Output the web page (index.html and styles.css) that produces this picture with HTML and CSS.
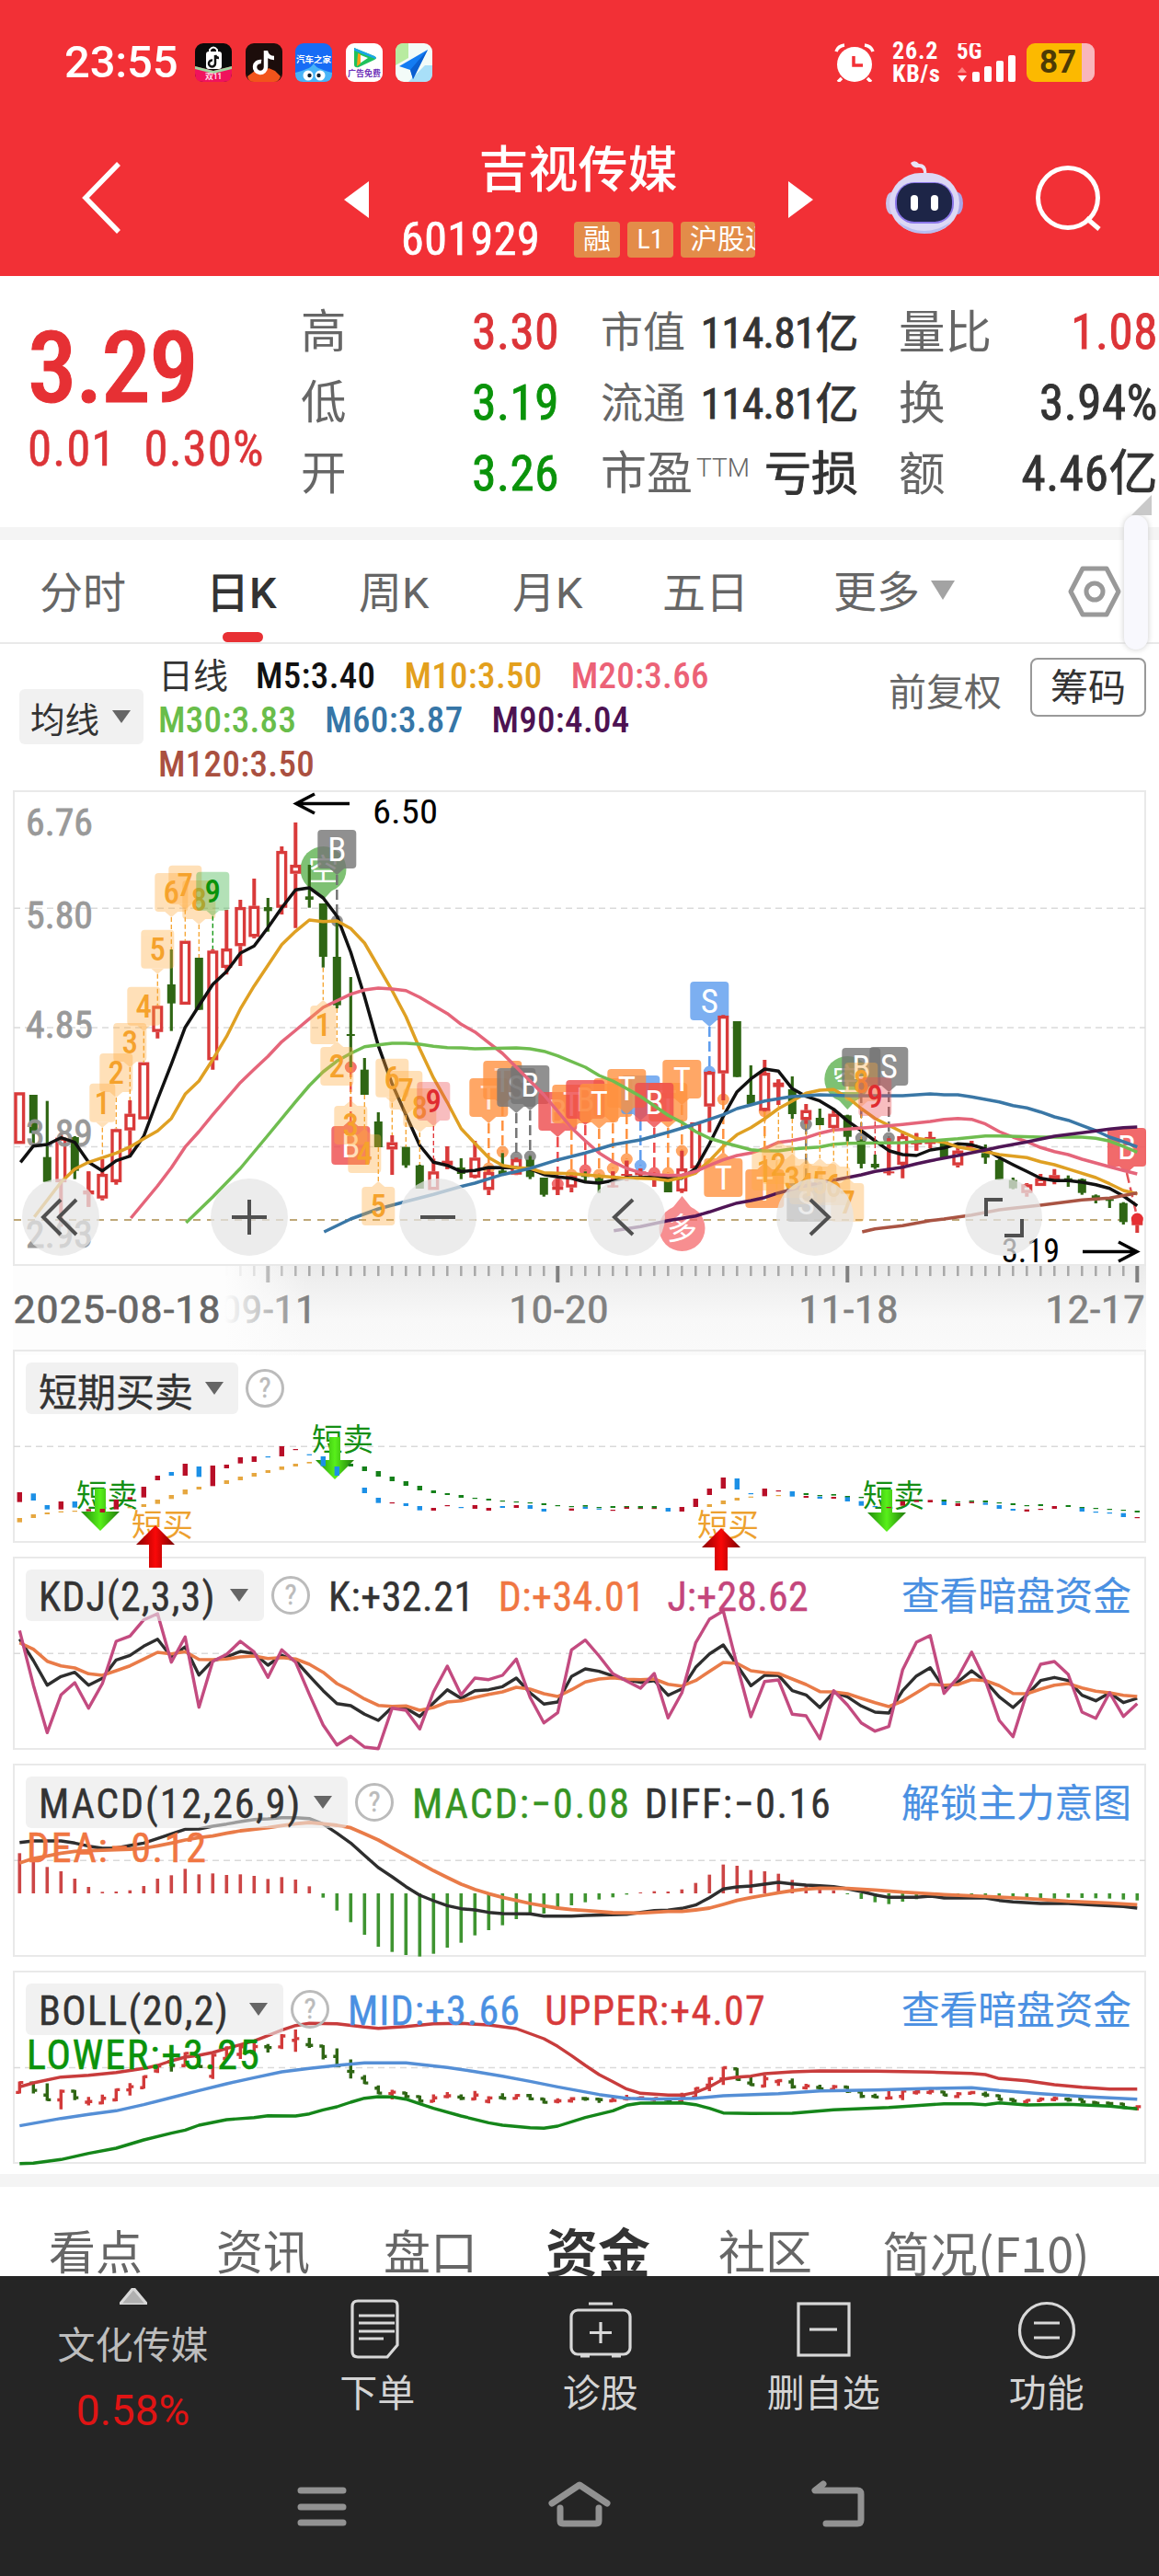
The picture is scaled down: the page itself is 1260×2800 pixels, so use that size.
FILE: index.html
```html
<!DOCTYPE html>
<html lang="zh-CN">
<head>
<meta charset="utf-8">
<title>吉视传媒 601929</title>
<link rel="stylesheet" href="styles.css">
</head>
<body>
<div class="phone">
<header class="top">
  <div class="status">
    <span class="clock">23:55</span>
    <div class="apps">
      <svg viewBox="0 0 40 42"><rect width="40" height="42" rx="9" fill="#0a0a0a"/><path d="M0 25l20 5 20-5v8q0 9-9 9H9q-9 0-9-9z" fill="#f0125c"/><path d="M0 25l20 5 20-5v3l-20 5-20-5z" fill="#9fd6a0"/><rect x="12" y="9" width="17" height="19" rx="3" fill="#fff"/><path d="M16 10v-3q4-5 8 0v3" fill="none" stroke="#fff" stroke-width="2"/><path d="M22 13v9a3.500 3.500 0 1 1-3-3.500M22 13q1 3 4 3" fill="none" stroke="#111" stroke-width="2.500"/><text x="20" y="39" font-size="9" font-weight="700" fill="#ffd7e4" text-anchor="middle">双11</text></svg>
      <svg viewBox="0 0 40 42"><rect width="40" height="42" rx="9" fill="#1c0d0b"/><path d="M2 36l8-6 6 4 9-7 7 3 6 6q-2 6-7 6H9q-6 0-7-6z" fill="#f2541b"/><path d="M22 8v18a6 6 0 1 1-5-6M22 9q2 7 9 7" fill="none" stroke="#fff" stroke-width="4.500"/></svg>
      <svg viewBox="0 0 40 42"><rect width="40" height="42" rx="9" fill="#176cf5"/><path d="M0 32q8-2 12-4 5-1 8-6 3 5 8 6 4 2 12 4v1q0 9-9 9H9q-9 0-9-9z" fill="#48b4f7"/><text x="20" y="21" font-size="9.500" font-weight="700" fill="#fff" text-anchor="middle">汽车之家</text><circle cx="14" cy="35" r="5.500" fill="#fff"/><circle cx="27" cy="35" r="5.500" fill="#fff"/><circle cx="15.500" cy="35" r="2.200" fill="#123"/><circle cx="25.500" cy="35" r="2.200" fill="#123"/></svg>
      <svg viewBox="0 0 40 42"><rect width="40" height="42" rx="9" fill="#fff"/><path d="M9 5l22 9q4 2 0 4L14 26q-5 1-5-3z" fill="#1ec25b"/><path d="M9 5l22 9q3 2 1 3L9 8z" fill="#1aa4ea"/><path d="M14 12l10 4-9 6z" fill="#fff"/><path d="M13 11l3 1v10l-4 3z" fill="#ff9d18"/><text x="20" y="36" font-size="9" font-weight="700" fill="#6e30b8" text-anchor="middle">广告免费</text></svg>
      <svg viewBox="0 0 40 42"><rect width="40" height="42" rx="9" fill="#f3fbf8"/><path d="M0 9q0-9 9-9h5v16L0 24z" fill="#b8eba0"/><path d="M14 42L32 24h8v9q0 9-9 9z" fill="#a8dff8"/><path d="M35 7L4 25l12 4 3 10z" fill="#147cf2"/><path d="M35 7L16 29l3 10z" fill="#0a5fd0"/></svg>
    </div>
    <div class="sys">
      <svg class="alarm" viewBox="0 0 44 42"><circle cx="22" cy="23" r="19" fill="#fff"/><path d="M2 9q2-6 9-7M42 9q-2-6-9-7M8 38l-4 4M36 38l4 4" stroke="#fff" stroke-width="3.500" fill="none"/><path d="M21 14v10h10" stroke="#f23036" stroke-width="3.500" fill="none"/></svg>
      <div class="rate"><span>26.2</span><span>KB/s</span></div>
      <svg class="signal" viewBox="0 0 66 42"><text x="0" y="17" font-size="25" font-weight="700" fill="#fff">5G</text><path d="M6 26l5 6H1z" fill="#ff8080"/><path d="M6 42l5-7H1z" fill="#fff"/><g fill="#fff"><rect x="17" y="31" width="8" height="11" rx="2"/><rect x="30" y="25" width="8" height="17" rx="2"/><rect x="43" y="19" width="8" height="23" rx="2"/><rect x="56" y="13" width="8" height="29" rx="2"/></g></svg>
      <div class="battery"><span>87</span></div>
    </div>
  </div>
  <div class="nav">
    <svg class="back" viewBox="0 0 44 80"><path d="M40 3L4 40l36 37" fill="none" stroke="#fff" stroke-width="5.500"/></svg>
    <svg class="tri" viewBox="0 0 28 42"><path d="M28 1v40L1 21z" fill="#fff"/></svg>
    <div class="title">
      <h1>吉视传媒</h1>
      <div class="code"><b>601929</b><div class="tags"><i>融</i><i>L1</i><i>沪股通</i></div></div>
    </div>
    <svg class="tri" viewBox="0 0 28 42"><path d="M0 1v40l27-20z" fill="#fff"/></svg>
    <svg class="robot" viewBox="0 0 86 80"><path d="M42 16q1-10-6-9-6 1-8-5 5-4 9 1 10 0 8 13z" fill="#e9e4f6"/><ellipse cx="7" cy="46" rx="6" ry="12" fill="#c9c3ea"/><ellipse cx="79" cy="46" rx="6" ry="12" fill="#a8a4e6"/><rect x="5" y="13" width="76" height="65" rx="34" fill="#dcd8f5"/><path d="M14 66q29 20 58 0-10 13-29 13T14 66z" fill="#b9bdf0"/><rect x="11" y="23" width="64" height="45" rx="21" fill="#8b77e8"/><rect x="13" y="24" width="60" height="42" rx="19" fill="#1d2547"/><rect x="28" y="37" width="8" height="17" rx="4" fill="#fff"/><rect x="50" y="37" width="8" height="17" rx="4" fill="#fff"/></svg>
    <svg class="search" viewBox="0 0 72 72"><circle cx="35" cy="35" r="32.500" fill="none" stroke="#fff" stroke-width="5"/><path d="M55 57l14 12" stroke="#fff" stroke-width="5"/></svg>
  </div>
</header>

<section class="quote">
  <div class="price"><strong>3.29</strong><div class="chg"><span>0.01</span><span>0.30%</span></div></div>
  <dl class="c1"><dt>高</dt><dd class="red">3.30</dd><dt>低</dt><dd class="green">3.19</dd><dt>开</dt><dd class="green">3.26</dd></dl>
  <dl class="c2"><dt>市值</dt><dd>114.81亿</dd><dt>流通</dt><dd>114.81亿</dd><dt class="pe">市盈<sup>TTM</sup></dt><dd class="loss">亏损</dd></dl>
  <dl class="c3"><dt>量比</dt><dd class="red">1.08</dd><dt>换</dt><dd>3.94%</dd><dt>额</dt><dd>4.46亿</dd></dl>
</section>
<div class="band"></div>
<nav class="periods">
  <span>分时</span><span class="on">日K</span><span>周K</span><span>月K</span><span>五日</span><span class="more">更多<svg viewBox="0 0 26 21"><path d="M0 0h26L13 21z" fill="#a3a3a3"/></svg></span>
  <svg class="hex" viewBox="0 0 58 56"><path d="M16 3h26l13 25-13 25H16L3 28z" fill="none" stroke="#999" stroke-width="5" stroke-linejoin="round"/><circle cx="29" cy="28" r="9" fill="none" stroke="#999" stroke-width="5"/></svg>
  <div class="grip"><svg viewBox="0 0 22 22"><path d="M22 0v22H0z" fill="#c4c4c4"/></svg><div></div></div>
</nav>

<section class="legend">
  <button class="chip">均线<i class="caret"></i></button>
  <div class="mas">
    <span class="cn">日线</span><span class="m5">M5:3.40</span><span class="m10">M10:3.50</span><span class="m20">M20:3.66</span>
    <span class="m30">M30:3.83</span><span class="m60">M60:3.87</span><span class="m90">M90:4.04</span>
    <span class="m120">M120:3.50</span>
  </div>
  <span class="adj">前复权</span><button class="chips">筹码</button>
</section>

<section class="plot"><svg id="price" viewBox="14 859 1232 516"></svg></section>
<section class="dates"><svg id="dates" viewBox="14 1375 1232 92"></svg></section>

<section class="panel">
  <svg class="draw" id="shortp" viewBox="14 1467 1232 210"></svg>
  <div class="head"><button class="chip">短期买卖<i class="caret"></i></button><i class="help">?</i></div>
</section>
<section class="panel">
  <svg class="draw" id="kdj" viewBox="14 1692 1232 210"></svg>
  <div class="head"><button class="chip k">KDJ(2,3,3)<i class="caret"></i></button><i class="help">?</i><span class="v g1">K:+32.21</span><span class="v d">D:+34.01</span><span class="v j">J:+28.62</span><a>查看暗盘资金</a></div>
</section>
<section class="panel">
  <svg class="draw" id="macd" viewBox="14 1917 1232 210"></svg>
  <div class="head"><button class="chip m">MACD(12,26,9)<i class="caret"></i></button><i class="help">?</i><span class="v g2">MACD:−0.08</span><span class="v diff">DIFF:−0.16</span><a>解锁主力意图</a></div>
  <div class="line2 dea">DEA:−0.12</div>
</section>
<section class="panel">
  <svg class="draw" id="boll" viewBox="14 2142 1232 210"></svg>
  <div class="head"><button class="chip b">BOLL(20,2)<i class="caret"></i></button><i class="help">?</i><span class="v mid">MID:+3.66</span><span class="v up">UPPER:+4.07</span><a>查看暗盘资金</a></div>
  <div class="line2 low">LOWER:+3.25</div>
</section>
<div class="band b2"></div>
<nav class="sections"><span>看点</span><span>资讯</span><span>盘口</span><span class="on">资金</span><span>社区</span><span class="f10">简况(F10)</span></nav>

<footer>
  <div class="actions">
    <div class="sector"><svg viewBox="0 0 30 18"><path d="M15 0l15 18H0z" fill="#b0b0b0"/></svg><span>文化传媒</span><em>0.58%</em></div>
    <div><svg viewBox="0 0 68 66"><path d="M13 2h38q5 0 5 5v43L45 63H13q-6 0-6-6V8q0-6 6-6z" /><path d="M14 18h39M14 26h39M14 35h39M14 43h27"/></svg><span>下单</span></div>
    <div><svg viewBox="0 0 68 66"><rect x="2" y="12" width="64" height="48" rx="7"/><path d="M21 5h26M12 62h10M46 62h10M34 25v23M22 36.500h24"/></svg><span>诊股</span></div>
    <div><svg viewBox="0 0 68 66"><rect x="7" y="5" width="55" height="56"/><path d="M19 33h30"/></svg><span>删自选</span></div>
    <div><svg viewBox="0 0 68 66"><circle cx="34" cy="34" r="29.500"/><path d="M20 26h28M20 42h28"/></svg><span>功能</span></div>
  </div>
  <div class="sysnav">
    <svg viewBox="0 0 72 56"><path d="M13 13h46M13 31h46M13 48h46"/></svg>
    <svg viewBox="0 0 72 56"><path d="M6 27L36 7l30 20M15 32v14q0 3 3 3h36q3 0 3-3V32"/></svg>
    <svg viewBox="0 0 72 56"><path d="M21 6l-9 7h46q4 0 4 4v28q0 4-4 4H24"/></svg>
  </div>
</footer>
</div>
<script src="charts.js"></script>
</body>
</html>
```
FILE: styles.css
```css
*{box-sizing:border-box}
body{margin:0;background:#fff;font-family:Roboto,"Noto Sans CJK SC",sans-serif;font-stretch:75%;color:#333}
.phone{width:1260px;height:2800px;overflow:hidden;background:#fff;display:flex;flex-direction:column}
.phone>*{flex:none}
button{font:inherit;border:0;color:inherit;padding:0}
i,em{font-style:normal}
svg{display:block}
svg text{font-family:Roboto,"Noto Sans CJK SC",sans-serif;font-stretch:75%}
.red{color:#dc3438}.green{color:#0a930a}

.top{height:300px;background:#f23036;color:#fff}
.status{height:135px;padding:0 70px;display:flex;align-items:center}
.clock{font-size:49px;font-weight:500;font-stretch:100%;letter-spacing:-.2px;width:142px}
.apps{display:flex;gap:14.600px}
.apps svg{width:40px;height:42px}
.sys{margin-left:auto;display:flex;align-items:center}
.alarm{width:44px;height:42px;margin-right:19px}
.rate{display:flex;flex-direction:column;font-size:26px;font-weight:700;line-height:25px;width:70px;height:50px;letter-spacing:.8px}
.signal{width:66px;height:42px;margin-right:10px}
.battery{width:74px;height:42px;border-radius:9px;background:linear-gradient(90deg,#fcb900 60px,#f9b6bc 60px);color:#4c3a05;font-size:35px;font-weight:700;line-height:42px;padding-left:14px;font-stretch:100%}
.nav{height:165px;display:flex;align-items:flex-start}
.back{width:44px;height:80px;margin:40px 240px 0 89px}
.tri{width:28px;height:42px;margin-top:61px}
.title{width:456px;padding-left:35px;height:165px}
h1{margin:15px 0 0;font-size:54px;line-height:72px;font-weight:500;width:385px;text-align:center}
.code{display:flex;align-items:center;height:42px;margin-top:17px;width:390px}
.code b{font-size:50px;font-weight:400;width:188px;letter-spacing:.5px;-webkit-text-stroke:.7px}
.tags{display:flex;gap:8px;width:197px;overflow:hidden}
.tags i{height:39px;line-height:38px;background:#e38c49;border-radius:4px;font-size:30px;padding:0 10px;white-space:nowrap;min-width:50px;text-align:center}
.robot{width:86px;height:80px;margin:40px 0 0 77px}
.search{width:72px;height:72px;margin:45px 0 0 78px}

.quote{height:273px;display:flex;padding-top:23px;position:relative}
.price{width:327px;padding-left:30px;color:#e63034}
.price strong{display:block;font-size:107px;line-height:110px;margin-top:23px;font-weight:500;letter-spacing:-1.500px;-webkit-text-stroke:1px}
.chg{display:flex;gap:30px;font-size:53px;line-height:60px;margin-top:2px;color:#dc3438;letter-spacing:1px;-webkit-text-stroke:.5px}
dl{margin:0;display:grid;grid-template-columns:auto 1fr;grid-auto-rows:77px;align-items:center;line-height:77px;white-space:nowrap}
dt{font-size:49.500px;color:#666}
dd{margin:0;text-align:right;font-size:53px;-webkit-text-stroke:.9px;letter-spacing:.6px}
.c1{width:281px;margin-right:45px}
.c2{width:280px;margin-right:44px;grid-template-columns:108px 172px}
.c2 dt{font-size:46px}.c2 dd{font-size:47px;letter-spacing:-.6px}
.c2 .pe{font-size:50px}.c2 .loss{font-size:51px;letter-spacing:0}
sup{font-size:28px;font-weight:300;vertical-align:14px;line-height:1;margin-left:4px;font-stretch:100%}
.c3{width:282px}
.c3 dt{font-size:50.500px}
.band{height:14px;background:#f4f4f4}
.periods{height:113px;border-bottom:2px solid #e9e9e9;display:flex;padding-left:43px;font-size:47px;line-height:116px;color:#666;position:relative;font-stretch:100%}
.periods span{width:167px;position:relative}
.periods span:first-child{width:181px}
.periods span:nth-child(2){width:166px;color:#333;font-weight:500}
.periods span:nth-child(4){width:163px}
.periods span:nth-child(5){width:186px}
.periods .on::after{content:"";position:absolute;left:18px;bottom:0;width:44px;height:11px;border-radius:6px;background:#e83034}
.periods .more{display:flex;align-items:center;gap:12px;width:180px;padding-top:3px}
.more svg{width:26px;height:21px;margin-top:-5px}
.hex{width:58px;height:56px;margin:28px 0 0 75px}
.grip{position:absolute;right:8px;top:-49px;width:30px}
.grip svg{width:22px;height:22px;margin-left:8px;opacity:.9}
.grip div{height:146px;width:26px;border-radius:13px;background:#f8f8fd;box-shadow:0 0 6px #ccc}

.legend{height:159px;display:flex;padding-left:21px;position:relative}
.chip{display:flex;align-items:center;gap:11px;border-radius:6px;background:rgba(232,232,232,.6)}
.caret{border:solid transparent;border-width:14px 10.500px 0;border-top-color:#666}
.legend .chip{margin-top:49px;width:135px;height:60px;padding:0 14px 0 12px;font-size:37.500px;white-space:nowrap}
.mas{margin-left:16px;padding-top:11px;display:flex;flex-wrap:wrap;column-gap:31px;width:640px;font-size:39px;line-height:48px;height:154px;font-weight:500;align-content:flex-start;letter-spacing:.3px}
.mas .cn{font-weight:400;width:75px;letter-spacing:0;font-size:38px;white-space:nowrap}
.m5{color:#111}.m10{color:#e3a01d}.m20{color:#ec6277}.m30{color:#69bd4a}.m60{color:#3676a7}.m90{color:#4d1252}.m120{color:#aa5040}
.mas .m90{margin-right:60px}
.adj{font-size:41px;line-height:60px;color:#666;margin:23px 0 0 154px;white-space:nowrap}
.chips{width:126px;height:64px;border:2px solid #999;border-radius:8px;background:#fff;font-size:41px;line-height:62px;margin:15px 0 0 31px}
.plot{height:516px;padding-left:14px}
.plot svg,.dates svg{width:1232px;height:100%;overflow:visible}
.plot svg{position:relative;z-index:1}
.dates{height:92px;padding-left:14px;color:#666}
.dates svg{height:92px}
.panel{width:1232px;height:210px;margin:0 0 15px 14px;border:2px solid #e9e9e9;position:relative}
.draw{position:absolute;left:-2px;top:-2px;width:1232px;height:210px;overflow:visible;z-index:1}
.head{display:flex;align-items:center;padding:12px 14px 0 12px;font-size:44px;position:relative;-webkit-text-stroke:.4px}
.panel .head{z-index:2}
.panel .chip{height:56px;padding:3px 17px 0 14px;font-size:42px;gap:13px;width:231px;white-space:nowrap}
.panel .k{width:259px;font-size:44px;letter-spacing:1.200px}.panel .m{width:350px;font-size:44px;letter-spacing:1.800px}.panel .b{width:280px;font-size:44px;letter-spacing:1.300px}
.chip .caret{margin-left:auto}
.panel .caret{margin-top:-4px}
.help{width:42px;height:42px;border:3px solid #bbb;border-radius:50%;font-size:31px;line-height:36px;text-align:center;color:#bbb;margin:0 20px 0 8px}
.v{white-space:nowrap;margin-right:26px;padding-top:3px;letter-spacing:.5px}
.d,.dea{color:#f07642}.d{margin-right:24px}.j{color:#c4467c;letter-spacing:.2px}.g2{color:#369423}.mid{color:#4a90e2}.up{color:#d73a3a}.low{color:#0b930b}
.g2{letter-spacing:2px;margin-right:15px}.diff{letter-spacing:1.600px}.mid{letter-spacing:1.100px}.up{letter-spacing:1.200px}
.head a{margin-left:auto;color:#4a90e2;font-size:41.700px;line-height:50px;padding-top:4px;-webkit-text-stroke:.2px}
.line2{position:relative;z-index:2;font-size:44px;line-height:46px;padding-left:13px;margin-top:-1px;letter-spacing:1.700px;-webkit-text-stroke:.6px}
.low{letter-spacing:1.900px}
.b2{margin-top:-4px}
.sections{height:97px;overflow:hidden;display:flex;padding-left:53px;font-size:51px;line-height:60px;padding-top:43px;color:#666;white-space:nowrap}
.sections span{width:182px}
.sections span:nth-child(3){width:176px}
.sections .on{font-size:57px;font-weight:700;color:#333;width:188px;line-height:62px}
.sections .f10{width:240px;font-size:52px;line-height:59px;font-family:"Noto Sans CJK SC",sans-serif;margin-top:-2px;color:#6c6c6c}
.sections span:nth-child(5){width:178px}

footer{height:326px;background:#252525;color:#d4d4d4}
.actions{display:grid;grid-template-columns:289px repeat(4,242.500px);height:190px}
.actions>div{display:flex;flex-direction:column;align-items:center;font-size:41px;line-height:60px;padding-top:25px}
.actions>div>svg{width:68px;height:66px;fill:none;stroke:#d8d8d8;stroke-width:3.200;margin-bottom:7px}
.actions>.sector{padding:13px 0 0 0;color:#bdbdbd}
.actions>.sector svg{width:30px;height:18px;margin:0 0 15px}
.sector em{color:#e01414;font-size:46px;font-stretch:100%;margin-top:10px}
.sysnav{display:flex;justify-content:space-between;padding:30px 314px 0}
.sysnav svg{width:72px;height:56px;fill:none;stroke:#929292;stroke-width:7;stroke-linecap:round;stroke-linejoin:round}
```
FILE: charts.js
```js
// 82 trading days, 15px apart; series are stored in thirds of a pixel.
const X0 = 21.3, STEP = 15;
const px = i => X0 + STEP * i;
const put = (id, s) => { document.getElementById(id).innerHTML = s; };

// [r|g, high, bodyTop, bodyBottom, low]
const candles = [];
const addCandles = (text, d) => text.trim().split(';').forEach(t => {
  const p = t.trim().split(' ');
  candles.push([p[0], ...p.slice(1).map(v => 850 + (+v + d) / 3)]);
});
addCandles('r 1012 1012 1180 1180;g 1020 1020 1145 1180;g 1040 1223 1304 1304;r 1145 1160 1305 1450;g 1155 1158 1268 1295;r 1270 1332 1345 1385;r 1230 1278 1358 1364;r 1130 1132 1305 1313;r 1038 1082 1136 1218;r 914 914 1100 1100;r 728 730 815 836;g 546 660 722 812;r 518 518 726 726;g 573 573 743 743;r 545 550 907 938;r 417 543 606 628;r 384 408 535 600;r 315 404 505 510;g 378 408 421 488;r 210 225 410 432;r 132 270 299 476;g 270 373 384 410;g 396 396 570 605;g 450 570 728 738;g 636 822 828 930;g 900 938 1020 1020;g 1077 1107 1191 1191;r 1152 1175 1198 1281;g 1190 1190 1250 1258;g 1248 1250 1326 1326;r 1228 1270 1330 1330;r 1188 1235 1250 1262', 0);
addCandles('g 657 687 708 725;r 600 655 720 722;r 690 702 760 777;g 640 697 708 712;r 655 660 710 712;g 650 662 718 725;g 720 720 776 782;r 725 750 760 777;r 705 715 752 768;g 700 712 718 735;g 715 722 732 770;r 700 745 752 752;r 665 708 714 730;r 690 700 712 720;r 710 712 724 750;g 720 728 768 768;r 632 690 765 770;r 540 540 690 690;r 372 375 488 572;r 190 192 380 468;g 210 210 392 392;g 354 450 480 482;r 336 378 502 505;r 400 410 425 483;g 390 432 513 528;r 480 500 532 545;g 495 525 549 549;r 500 512 558 560;g 515 517 587 602;g 595 600 675 690;g 645 675 687 692;r 592 700 706 712;r 575 585 678 722;r 575 600 612 632;r 570 588 610 625;g 600 602 655 655;r 620 632 680 687;r 600 612 622 622;g 612 640 655 675;g 660 663 727 727;g 720 728 755 758;r 738 742 770 782;r 708 722 747 747;r 692 712 730 742;g 713 722 735 750;g 723 725 770 776;g 775 778 794 804;g 787 790 796 819;g 800 803 865 873;r 840 850 875 900', 570);

// "x,y x,y ..." with per-block origin and scale
const path = blocks => blocks.map(([ox, oy, sx, t]) => t.split(' ').map(p => {
  const [x, y] = p.split(',').map(Number);
  return (ox + x / sx).toFixed(1) + ',' + (oy + y / 3).toFixed(1);
}).join(' ')).join(' ');
const line = (pts, color, w) => `<polyline points="${pts}" fill="none" stroke="${color}" stroke-width="${w}" stroke-linejoin="round"/>`;
const A = t => [0, 850, 3, t], B = t => [480, 1040, 3, t], C = t => [860, 1040, 3, t];

const mas = [
 ['#111', [A('67,1240 109,1187 154,1182 199,1160 244,1175 289,1240 334,1268 379,1235 424,1220 469,1155 514,1035 559,920 604,800 649,730 694,660 739,618 784,558 829,535 874,475 919,410 964,352 1009,345 1054,378 1099,437 1144,555 1189,700 1234,860 1279,985 1324,1085 1369,1185 1414,1240 1459,1250'), B('64,700 109,697 154,687 199,688 244,688 289,692 334,710 379,718 424,722 469,734 514,738 559,730 604,720 649,720 694,718 739,723 784,722 829,690 874,610 919,520 964,440 1009,398 1054,366 1099,373 1144,430'), C('49,455 94,470 139,497 184,535 229,567 274,600 319,632 364,645 409,648 454,630 499,623 544,610 589,613 634,627 679,655 724,678 769,700 814,722 859,730 904,730 949,735 994,743 1039,755 1084,780 1129,812')]],
 ['#dfa023', [A('112,1418 199,1305 244,1262 289,1240 379,1210 424,1190 469,1163 514,1138 559,1097 604,1018 649,975 694,905 739,830 784,740 829,665 919,530 964,487 1009,450 1054,455 1099,453 1144,478 1189,525 1279,680 1324,765 1369,870 1414,965 1459,1045'), B('64,560 109,608 154,655 199,680 244,688 289,690 334,704 424,707 514,715 604,722 649,722 694,724 739,730 784,720 829,705 874,665 919,618 964,580 1009,557 1054,528 1099,495 1144,470'), C('49,445 94,435 139,433 184,458 229,495 274,527 319,550 364,572 409,592 499,605 544,620 634,635 679,645 769,655 814,668 859,678 904,692 994,720 1039,740 1084,762 1129,773')]],
 ['#e5657a', [A('427,1422 514,1317 559,1258 604,1190 649,1140 694,1085 784,980 829,937 874,895 919,847 964,810 1009,772 1054,735 1144,692 1189,678 1234,672 1279,675 1324,680 1369,702 1459,755'), B('19,185 64,220 109,245 154,280 199,315 289,405 334,450 424,558 469,600 514,640 559,668 604,690 649,704 694,710 739,713 784,712 829,700 874,680 919,662 964,648 1009,640 1054,625 1099,605'), C('0,600 49,590 94,575 139,565 184,562 274,555 364,547 454,537 499,530 544,527 589,530 634,545 679,570 724,588 769,603 814,622 859,635 904,645 949,660 1039,685 1084,697 1129,708')]],
 ['#6fbd50', [A('607,1437 694,1353 784,1260 874,1152 964,1043 1009,990 1054,945 1099,910 1144,885 1189,863 1234,857 1279,852 1324,852 1369,855 1414,862 1459,866'), B('64,297 109,300 244,297 289,300 334,308 379,323 469,360 514,387 559,405 604,430 649,455 739,517 784,540 829,570 874,592 919,605 964,617 1009,629 1054,633 1099,633'), C('0,627 94,620 139,611 184,608 364,606 454,600 544,593 634,584 679,584 814,588 949,588 994,592 1039,601 1084,618 1129,637')]],
 ['#3a77a6', [A('1057,1467 1144,1425 1234,1392 1324,1368 1414,1345'), B('60,750 109,738 199,710 289,690 379,662 469,640 559,613 649,597 739,572 829,545 919,515 964,495 1009,483 1054,470'), C('0,456 94,450 184,453 364,453 454,447 499,450 544,450 589,457 634,465 679,473 724,485 769,493 814,506 859,522 904,533 949,550 994,567 1039,588 1084,603 1129,620')]],
 ['#4f1555', [B('562,893 649,880 739,860 829,845 874,832 919,817 964,803 1009,795 1054,785 1099,770'), C('49,746 94,737 184,720 229,711 274,700 364,686 409,675 454,665 544,648 634,630 679,620 769,604 859,585 949,574 994,568 1039,562 1084,557 1129,555')]],
 ['#a95443', [C('232,897 274,887 364,877 454,860 499,855 589,842 679,825 724,820 814,810 949,793 1039,787 1129,770')]]
];

const RED = '#d93a3a', GREEN = '#2f6614';
function drawCandle([t, hi, top, bot, lo], i) {
  const x = px(i);
  if (t === 'g') return `<path d="M${x} ${hi}V${lo}" stroke="${GREEN}" stroke-width="3.2"/><rect x="${x - 4.5}" y="${top}" width="9" height="${Math.max(2, bot - top)}" fill="${GREEN}"/>`;
  let s = `<path d="M${x} ${hi}V${top}M${x} ${bot}V${lo}" stroke="${RED}" stroke-width="4"/>`;
  if (bot - top < 6) return s + `<path d="M${x} ${hi}V${lo}" stroke="${RED}" stroke-width="4"/><rect x="${x - 6}" y="${top}" width="12" height="${bot - top}" fill="${RED}"/>`;
  return s + `<rect x="${x - 4.3}" y="${top + 1.6}" width="8.6" height="${bot - top - 3.2}" fill="#fff" stroke="${RED}" stroke-width="3.4"/>`;
}

const C4 = { o: '#ff9240', r: '#ee4a4c', k: '#757575', b: '#5c9cee' };
// letter flags, back to front: [day, letter, colour, boxTop, dotY, below?]
const flags = [
 [23,'B','k',902,1001],[24,'B','r',1224,1160,1],
 [34,'T','o',1172,1270],[35,'T','o',1153,1252],[36,'S','k',1161,1258],[37,'B','k',1158,1257],
 [39,'B','r',1187,1287],[43,'T','o',1172,1270],[40,'T','o',1179,1277],[41,'B','r',1174,1272],[42,'T','o',1178,1277],
 [45,'S','b',1169,1267],[47,'T','o',1177,1275],[44,'T','o',1162,1260],[48,'T','o',1152,1251],[46,'B','r',1177,1275],
 [50,'S','b',1067,1165],[51,'T','o',1259,1195,1],[54,'T','o',1271,1208,1],[57,'S','k',1286,1222,1],
 [61,'B','k',1139,1237],[63,'S','k',1138,1237]
];
// letters overlapped by a neighbour are drawn faint
const faint = { 34: .8, 35: .6, 36: .5, 39: .6, 40: .9, 41: .4, 43: 0, 45: 0, 47: .5 };
function flag([i, ch, c, y, dot, below]) {
  const x = px(i), col = C4[c];
  const tip = below ? `M${x - 8} ${y}L${x} ${y - 7}L${x + 8} ${y}z` : `M${x - 8} ${y + 42}L${x} ${y + 49}L${x + 8} ${y + 42}z`;
  const stem = below ? `M${x} ${dot}V${y - 6}` : `M${x} ${y + 49}V${dot}`;
  return `<path d="${stem}" stroke="${col}" stroke-width="2.5" stroke-dasharray="11 5"/><g fill="${col}" opacity=".8"><circle cx="${x}" cy="${dot}" r="6.500"/><rect x="${x - 21}" y="${y}" width="42" height="42" rx="4"/><path d="${tip}"/></g><text x="${x}" y="${y + 34}" font-size="37" fill="#fff" fill-opacity="${faint[i] ?? 1}" text-anchor="middle">${ch}</text>`;
}
// sequence counters: [day, digit, boxTop, below?, colour]
const counts = [
 [6,1,1177.7,0],[7,2,1145,0],[8,3,1112,0],[9,4,1072.7,0],[10,5,1010.7,0],[11,6,949,0],[12,7,940.7,0],[13,8,957,0],[14,9,947.7,0,'g'],
 [22,1,1093,1],[23,2,1138,1],[24,3,1202,1],[25,4,1233,1],[26,5,1290,1],
 [27,6,1150.7,0],[28,7,1164,0],[29,8,1183,0],[30,9,1176,0,'r'],
 [54,1,1252,1],[55,2,1245,1],[56,3,1260,1],[57,4,1267,1],[58,5,1265,1],[59,6,1268,1],[60,7,1286,1],[61,8,1155,0],[62,9,1171,0,'r']
];
function count([i, n, y, below, c]) {
  const x = px(i), w = n === 1 ? 28 : 36, k = candles[i];
  const bg = c === 'g' ? '#2fae3a' : c === 'r' ? '#ec4b50' : '#ffab3d', fg = c === 'g' ? '#0a930a' : c === 'r' ? '#e02c30' : '#f5a22c';
  const stem = below ? `M${x} ${k[4]}V${y - 6}` : `M${x} ${y + 48}V${k[1]}`;
  const tip = below ? `M${x - 7} ${y}L${x} ${y - 6}L${x + 7} ${y}z` : `M${x - 7} ${y + 42}L${x} ${y + 48}L${x + 7} ${y + 42}z`;
  return `<path d="${stem}" stroke="${fg}" stroke-width="1.3" stroke-dasharray="5 3"/><g fill="${bg}" opacity=".36"><rect x="${x - w / 2}" y="${y}" width="${w}" height="42" rx="4"/><path d="${tip}"/></g><text x="${x}" y="${y + 33}" font-size="35" font-weight="500" fill="${fg}" text-anchor="middle">${n}</text>`;
}
const pin = (x, y, up, col, ch) => `<g opacity=".75"><circle cx="${x}" cy="${y}" r="25" fill="${col}"/><path d="${up ? `M${x - 12} ${y - 20}L${x} ${y - 35}L${x + 12} ${y - 20}z` : `M${x - 12} ${y + 20}L${x} ${y + 33}L${x + 12} ${y + 20}z`}" fill="${col}"/><text x="${x}" y="${y + 12}" font-size="33" fill="#fff" text-anchor="middle">${ch}</text></g>`;

const txt = (x, y, s, w, size, fill, extra = '') => `<text x="${x}" y="${y}" font-size="${size}" fill="${fill}" textLength="${w}" lengthAdjust="spacingAndGlyphs" ${extra}>${s}</text>`;
const hline = (y, dash = '7 5', c = '#dadada', w = 1.5) => `<path d="M15 ${y}H1245" stroke="${c}" stroke-width="${w}" stroke-dasharray="${dash}"/>`;

let s = '<rect x="15" y="860" width="1230" height="515" fill="none" stroke="#e9e9e9" stroke-width="2"/>';
s += hline(987.3) + hline(1117) + hline(1246.5) + hline(1326, '8 7', '#bfa878', 2);
s += pin(351.5, 945, 0, '#53ad45', '空') + pin(921.3, 1173, 0, '#53ad45', '空') + pin(741.5, 1335, 1, '#f5696c', '多');
s += flags.map(flag).join('');
s += '<g opacity=".9"><path d="M1225 1275L1236 1322" stroke="#e04045" stroke-width="2.5" stroke-dasharray="11 5"/><rect x="1204" y="1226" width="42" height="42" rx="4" fill="#f05a5c"/><path d="M1217 1268h16l-8 7z" fill="#f05a5c"/><text x="1225" y="1260" font-size="37" fill="#fff" text-anchor="middle">B</text></g>';
s += candles.map(drawCandle).join('') + '<circle cx="1236.3" cy="1325" r="6.500" fill="#e62f33"/>';
[['6.76', 908], ['5.80', 1008.5], ['4.85', 1127.5], ['3.89', 1246], ['2.93', 1355.5]].forEach(([t, y]) => { s += txt(28, y, t, 73, 41.5, '#949494', 'stroke="#949494" stroke-width=".8" opacity=".95"'); });
s += mas.map(([c, b]) => line(path(b), c, 3.5)).join('');
s += counts.map(count).join('');
s += '<path d="M380 873.500H322M342 863l-20 10.500 20 10.500" fill="none" stroke="#000" stroke-width="3.5"/>' + txt(405, 895, '6.50', 71, 37, '#000');
s += txt(1089, 1372, '3.19', 63, 37, '#000') + '<path d="M1177 1360.500h57M1216 1350l20 10.500-20 10.500" fill="none" stroke="#000" stroke-width="3.500"/>';
const icons = ['M66 1304l-19 19 19 19M83 1304l-19 19 19 19', 'M252 1323h38M271 1304v38', 'M457 1323h38', 'M688 1304l-20 19 20 19', 'M881 1304l20 19-20 19', 'M1072 1322v-18h18M1111 1325v18h-19'];
[66, 271, 476, 681, 886, 1091].forEach((x, i) => { s += `<circle cx="${x}" cy="1323" r="42" fill="#e6e6e6" opacity=".74"/><path d="${icons[i]}" fill="none" stroke="#505050" stroke-width="4"/>`; });
put('price', s);

// date axis
s = '<defs><linearGradient id="ga" x2="0" y2="1"><stop offset="0" stop-color="#ebebeb"/><stop offset=".6" stop-color="#f8f8f8"/><stop offset="1" stop-color="#fafafa"/></linearGradient><linearGradient id="gb"><stop offset=".72" stop-color="#fdfdfd"/><stop offset="1" stop-color="#fdfdfd" stop-opacity="0"/></linearGradient></defs><rect x="14" y="1376" width="1232" height="97" fill="url(#ga)"/>';
for (let i = 15; i < 82; i++) { const big = (i - 18) % 21 === 0; s += `<path d="M${px(i)} 1376v${big ? 18 : 11}" stroke="${big ? '#808080' : '#a8a8a8'}" stroke-width="${big ? 4 : 2.5}"/>`; }
const bold = c => `stroke="${c}" stroke-width=".4"`;
s += txt(239, 1438, '09-11', 105, 42, '#808080', bold('#808080')) + '<rect x="14" y="1376" width="320" height="97" fill="url(#gb)"/>';
s += txt(14, 1438, '2025-08-18', 226, 42, '#666', bold('#666'));
[[553, '10-20'], [868, '11-18'], [1136, '12-17']].forEach(([x, t]) => { s += txt(x, 1438, t, 109, 42, '#808080', bold('#808080')); });
put('dates', s);

// short-term signals: day colour top bottom (R, B, y = gold, g = green)
const marks = '0 R 816 848,1 B 820 843,2 B 858 872,3 R 846 872,4 B 846 866,5 R 871 878,6 R 870 882,7 R 840 872,8 R 832 840,9 R 798 833,10 R 762 777,11 B 750 762,12 R 723 762,13 B 732 766,14 R 729 796,15 R 726 738,16 R 702 722,17 R 699 717,18 B 699 702,19 R 666 699,20 R 675 678,21 B 692 695,25 B 801 819,26 B 834 851,27 R 849 852,28 B 852 861,29 B 861 875,30 R 867 876,31 R 858 861,32 B 864 867,33 R 858 870,34 R 867 876,35 B 861 867,36 R 858 867,37 B 858 870,38 B 870 879,40 R 869 876,41 B 863 870,42 B 869 872,43 R 873 876,44 R 863 870,45 R 867 870,46 R 867 870,47 B 867 879,48 R 864 879,49 R 837 864,50 R 804 825,51 R 768 804,52 B 771 807,53 B 819 822,54 R 804 829,55 R 810 813,56 B 813 830,57 R 828 834,58 B 830 837,59 R 831 837,60 B 831 846,61 B 845 860,62 B 861 864,63 R 864 867,64 R 845 860,65 R 842 848,66 R 841 849,67 B 845 858,68 R 852 861,69 R 847 852,70 B 850 857,71 B 858 870,72 B 870 876,73 R 872 879,74 R 870 873,75 R 861 870,77 B 867 879,78 B 879 882,79 B 882 885,80 B 884 897,81 R 897 900,'
 + '0 y 900 914,1 y 888 900,2 y 882 888,3 y 878 882,4 y 876 879,8 y 864 868,9 y 855 864,10 y 840 854,11 y 825 838,12 y 807 823,13 y 798 807,15 y 777 789,16 y 765 777,17 y 753 765,18 y 744 753,19 y 732 743,20 y 723 732,21 y 717 722,50 y 855 864,51 y 843 855,52 y 834 843,53 y 830 833,55 y 825 828,'
 + '24 g 723 732,25 g 732 747,26 g 747 765,27 g 765 780,28 g 780 795,29 g 795 810,30 g 810 819,31 g 819 825,32 g 825 834,33 g 834 837,34 g 837 843,35 g 843 846,36 g 846 849,37 g 849 852,38 g 852 858,39 g 858 861,40 g 861 864,41 g 858 863,42 g 864 867,43 g 861 867,44 g 861 863,45 g 861 868,46 g 861 868,57 g 819 825,58 g 825 828,59 g 822 827,60 g 828 832,61 g 831 835,67 g 840 846,68 g 846 849,69 g 843 847,70 g 843 849,71 g 849 852,72 g 852 858,73 g 858 861,74 g 855 861,76 g 858 864,77 g 864 867,78 g 867 870,79 g 870 873,80 g 873 876,81 g 876 882';
const mc = { R: '#b80f28', B: '#1c90e6', y: '#e6a740', g: '#15801a' };
s = hline(1572.3);
s += [[83, 1638, '短卖'], [339, 1577, '短卖'], [938, 1638, '短卖']].map(([x, y, t]) => txt(x, y, t, 67, 34, '#148f14')).join('');
s += txt(143, 1669.5, '短买', 67, 34, '#eda12f') + txt(758, 1669.5, '短买', 67, 34, '#eda12f');
s += '<defs><linearGradient id="gd"><stop offset="0" stop-color="#1f8a0a"/><stop offset=".5" stop-color="#58f01a"/><stop offset="1" stop-color="#1f7a0a"/></linearGradient><linearGradient id="gr"><stop offset="0" stop-color="#8a0000"/><stop offset=".5" stop-color="#fa0808"/><stop offset="1" stop-color="#7a0000"/></linearGradient></defs>';
[[109, 1618], [364, 1562], [964, 1619]].forEach(([x, y]) => { s += `<path d="M${x - 6} ${y}h12v25h15l-21 21-21-21h15z" fill="url(#gd)"/>`; });
[[169, 1658], [784, 1661]].forEach(([x, y]) => { s += `<path d="M${x} ${y}l21 21h-14v25h-14v-25h-14z" fill="url(#gr)"/>`; });
(marks + ',22 B 699 731,23 B 732 762').split(',').forEach(m => { const [i, c, a, b] = m.split(' '); s += `<rect x="${px(+i) - 2.7}" y="${1350 + a / 3}" width="5.400" height="${Math.max(1.2, (b - a) / 3)}" fill="${mc[c]}"/>`; });
put('shortp', s);

// daily series with every point given
const full = (list, base) => list.split(' ').map((v, i) => px(i).toFixed(1) + ',' + (base + v / 3).toFixed(1)).join(' ');
s = hline(1797.3);
s += line(full('275 345 425 397 383 425 403 343 328 298 275 333 300 392 345 333 315 322 360 328 345 395 443 485 492 520 540 497 500 527 483 440 468 443 440 430 402 450 487 480 397 372 380 395 408 416 410 458 437 367 323 294 360 427 393 393 443 457 498 448 463 493 513 516 443 395 368 435 415 378 413 463 498 457 410 400 410 458 476 450 482 468', 1690), '#2e2e2e', 3.4);
s += line(full('287 308 347 362 369 388 393 378 362 340 318 323 316 341 342 340 333 330 338 335 340 357 383 420 443 470 491 494 493 507 498 480 476 465 455 447 432 438 453 462 440 415 405 401 406 407 405 422 428 410 380 351 354 378 384 387 405 423 446 447 453 468 482 495 477 450 422 425 423 407 410 427 452 453 438 425 420 434 445 450 458 462', 1690), '#e97b48', 3.6);
s += line(full('247 425 580 457 417 500 420 282 265 212 192 350 268 497 347 325 282 317 400 310 350 455 555 620 592 627 632 500 507 568 447 363 457 402 407 393 340 465 548 515 310 278 330 388 412 435 387 532 450 287 210 183 360 528 413 408 520 525 600 443 490 548 575 560 375 285 263 452 400 317 410 540 593 450 357 348 390 513 533 450 527 485', 1690), '#c34b80', 3.4);
put('kdj', s);

// sparse series: "day,y"
const sparse = (t, base) => t.split(' ').map(p => { const [i, y] = p.split(','); return px(+i).toFixed(1) + ',' + (base + y / 3).toFixed(1); }).join(' ');
s = hline(2022.3);
'-47 -30 -2 12 36 63 79 78 74 60 36 25 4 22 19 24 22 27 37 31 39 61 98 140 178 219 258 275 285 290 281 261 245 221 204 188 168 150 150 138 123 113 104 97 88 81 77 78 71 50 23 -10 -6 8 12 20 40 60 70 74 87 102 113 119 111 103 96 94 90 88 94 97 98 99 100 101 98 99 100 101 104 107'.split(' ').forEach((v, i) => {
  s += `<path d="M${px(i)} 2058V${2030 + v / 3}" stroke="${v < 84 ? '#cc4646' : '#3f9431'}" stroke-width="3.600"/>`;
});
s += line(sparse('0,938 1,933 3,933 4,940 5,950 6,957 7,956 8,948 9,940 10,925 11,910 12,895 13,894 14,885 15,878 16,870 17,863 18,861 19,857 20,857 21,860 22,878 23,908 24,940 25,980 26,1020 27,1050 28,1082 29,1110 30,1128 31,1144 32,1154 33,1158 34,1166 35,1170 37,1171 38,1178 40,1178 41,1176 44,1172 46,1160 47,1159 48,1153 49,1142 50,1118 51,1090 52,1083 53,1080 54,1074 55,1068 56,1073 57,1077 58,1079 59,1082 60,1089 61,1098 62,1109 63,1117 65,1117 66,1113 67,1119 70,1119 71,1127 72,1132 74,1137 76,1137 78,1142 80,1147 81,1152', 1690), '#2e2e2e', 3.4);
s += line(sparse('0,1005 1,990 2,982 3,973 4,967 5,965 7,962 8,960 9,957 10,949 11,940 12,930 13,922 14,917 15,908 16,900 17,895 18,890 19,883 20,877 21,873 22,877 23,882 24,890 25,910 26,930 27,955 28,980 29,1005 30,1030 31,1052 32,1074 33,1091 34,1105 35,1117 36,1127 37,1137 38,1145 39,1152 40,1157 41,1160 43,1167 45,1168 47,1163 48,1163 49,1158 50,1152 51,1140 52,1127 53,1118 54,1110 55,1102 56,1095 57,1090 58,1087 60,1088 62,1093 64,1100 67,1108 70,1114 73,1121 76,1130 79,1136 81,1141', 1690), '#e97b48', 3.8);
put('macd', s);

s = hline(2247.6);
const by = y => 2207 + (y - 894) * 0.193;
candles.forEach(([t, hi, top, bot, lo], i) => {
  const x = px(i), up = t === 'r', l = by(up ? bot : top), r = by(up ? top : bot);
  s += `<path d="M${x} ${by(hi) - 1}V${by(lo) + 1}M${x - 4} ${l}H${x}M${x} ${r}H${x + 4}" stroke="${up ? '#d23a3a' : '#2f6614'}" stroke-width="3.4"/>`;
});
s += line(sparse('0,715 1,702 3,683 5,677 7,668 9,655 10,645 11,630 12,618 13,612 14,603 15,590 17,565 18,548 19,530 20,515 21,508 23,509 25,520 26,524 28,518 30,509 32,508 34,513 36,525 38,558 39,583 40,613 41,645 42,675 43,698 44,722 45,736 47,742 48,742 49,733 50,715 51,690 52,683 53,680 54,672 56,666 58,663 62,664 66,667 69,671 70,675 71,688 73,695 75,708 77,716 79,722 81,722', 2030), '#c83c3c', 3.4);
s += line(sparse('0,842 3,818 5,805 7,793 9,773 11,750 13,727 15,705 17,685 19,666 21,655 23,645 25,637 28,637 31,652 33,665 35,680 37,697 39,715 42,740 44,752 46,755 49,752 51,744 55,737 58,728 62,725 66,720 69,718 71,727 74,737 77,746 81,755', 2030), '#558fd6', 3.4);
s += line(sparse('0,965 1,964 3,952 5,932 7,915 9,888 11,866 12,856 13,840 15,822 17,815 18,809 20,810 21,803 22,790 23,780 24,765 25,752 26,747 27,748 28,755 30,785 32,810 34,832 35,840 37,848 38,850 39,843 41,815 43,793 44,775 45,768 48,767 49,773 50,785 51,800 53,802 56,801 59,790 63,782 67,770 69,770 70,773 71,767 73,774 76,772 79,778 80,782 81,787', 2030), '#15861a', 3.4);
put('boll', s);
```
